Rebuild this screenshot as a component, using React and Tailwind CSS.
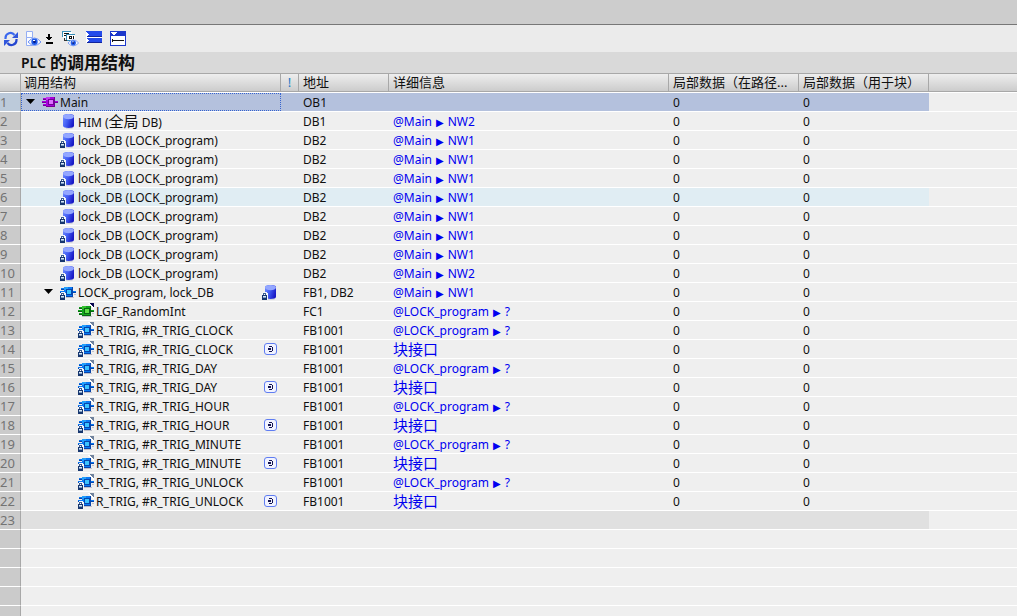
import React from 'react';
import clsx from 'clsx';

const rows = [
  { level: 0, icon: 'ob', open: true, name: 'Main', address: 'OB1', selected: true },
  { level: 1, icon: 'db', name: 'HIM', cjk: '全局', address: 'DB1', link: '@Main', target: 'NW2' },
  { level: 1, icon: 'idb', name: 'lock_DB (LOCK_program)', address: 'DB2', link: '@Main', target: 'NW1' },
  { level: 1, icon: 'idb', name: 'lock_DB (LOCK_program)', address: 'DB2', link: '@Main', target: 'NW1' },
  { level: 1, icon: 'idb', name: 'lock_DB (LOCK_program)', address: 'DB2', link: '@Main', target: 'NW1' },
  { level: 1, icon: 'idb', name: 'lock_DB (LOCK_program)', address: 'DB2', link: '@Main', target: 'NW1', hover: true },
  { level: 1, icon: 'idb', name: 'lock_DB (LOCK_program)', address: 'DB2', link: '@Main', target: 'NW1' },
  { level: 1, icon: 'idb', name: 'lock_DB (LOCK_program)', address: 'DB2', link: '@Main', target: 'NW1' },
  { level: 1, icon: 'idb', name: 'lock_DB (LOCK_program)', address: 'DB2', link: '@Main', target: 'NW1' },
  { level: 1, icon: 'idb', name: 'lock_DB (LOCK_program)', address: 'DB2', link: '@Main', target: 'NW2' },
  { level: 1, icon: 'fb', open: true, name: 'LOCK_program, lock_DB', right: 'idb', address: 'FB1, DB2', link: '@Main', target: 'NW1' },
  { level: 2, icon: 'fc', name: 'LGF_RandomInt', address: 'FC1', link: '@LOCK_program', target: '?' },
  ...['CLOCK', 'DAY', 'HOUR', 'MINUTE', 'UNLOCK'].flatMap((n) => [
    { level: 2, icon: 'fbLib', name: `R_TRIG, #R_TRIG_${n}`, address: 'FB1001', link: '@LOCK_program', target: '?' },
    { level: 2, icon: 'fbLib', name: `R_TRIG, #R_TRIG_${n}`, right: 'iface', address: 'FB1001', link: '块接口' },
  ]),
];

const indent = ['pl-[2px]', 'pl-[20px]', 'pl-[38px]'];

const Lock = () => (
  <g shapeRendering="crispEdges">
    <path d="M0 9h1V8h4v1h1v7H0z" fill="#f4f6fa" />
    <path d="M1 9h3v2H1z" fill="#3a5c92" />
    <path d="M2 10h1v1H2z" fill="#fff" />
    <path d="M0 11h5v5H0z" fill="#17366e" />
    <path d="M1 12h3v1H1z" fill="#d5e6f6" />
    <path d="M1 13h3v1H1z" fill="#7f9fc4" />
  </g>
);

const Cylinder = ({ locked }) => (
  <svg width="16" height="16" viewBox="0 0 16 16" aria-hidden="true">
    <defs>
      <linearGradient id="cyl" x1="0" x2="1" y1="0.1" y2="0.5">
        <stop offset="0" stopColor="#6f8cff" />
        <stop offset="0.5" stopColor="#405af2" />
        <stop offset="1" stopColor="#1a1ac6" />
      </linearGradient>
    </defs>
    <path d="M5 4h9v10l-2 2H6z" fill="#b9bcd0" opacity="0.5" />
    <path d="M3 3c0-2.6 11-2.6 11 0v10c0 2.6-11 2.6-11 0z" fill="url(#cyl)" />
    <ellipse cx="8.5" cy="3.6" rx="5.5" ry="2.6" fill="#94a7ff" />
    {locked && <Lock />}
  </svg>
);

const blockColors = {
  ob: { body: '#a800dc', light: '#dd70ff', pin: '#720096' },
  fb: { body: '#0a7af5', light: '#3cc4ff', pin: '#0645ac' },
  fc: { body: '#12a41e', light: '#5ce044', pin: '#086412' },
};

const Block = ({ kind, locked, corner }) => {
  const c = blockColors[kind];
  return (
    <svg width="16" height="16" viewBox="0 0 16 16" shapeRendering="crispEdges" aria-hidden="true">
      <path d="M4 13h10v1H4zM14 10h2v1h-2z" fill="#c0c0ca" />
      <path d="M1 5h3v1H1zM0 8h4v1H0zM1 11h3v1H1zM13 8h3v1h-3z" fill={c.pin} />
      <path d="M1 4h3v1H1zM0 7h4v1H0zM1 10h3v1H1zM13 7h3v1h-3z" fill={c.body} />
      <path d="M4 3h9v10H4z" fill={c.body} />
      <path d="M4 12h9v1H4zM12 3h1v10h-1z" fill={c.pin} />
      <path d="M4 3h4v3H4z" fill={c.light} opacity="0.5" />
      <path d="M6 5h6v6H6z" fill={c.pin} />
      <path d="M7 6h4v4H7z" fill={c.light} />
      {corner && (
        <>
          <path d="M9 0h7v7z" fill="#fff" />
          <path d="M11 0h5v5z" fill={corner} />
        </>
      )}
      {locked && <Lock />}
    </svg>
  );
};

const Interface = () => (
  <svg width="16" height="16" viewBox="0 0 16 16" aria-hidden="true">
    <rect x="2.5" y="2.5" width="12" height="11" rx="2.5" fill="#f1f3ff" stroke="#5f7df2" />
    <path d="M7 5h3v1h1v4h-1v1H7v-1h3V6H7zM6 7h3v2H6z" fill="#141450" shapeRendering="crispEdges" />
  </svg>
);

const RowIcon = ({ type }) => {
  if (type === 'db') return <Cylinder />;
  if (type === 'idb') return <Cylinder locked />;
  if (type === 'ob') return <Block kind="ob" />;
  if (type === 'fb') return <Block kind="fb" locked />;
  if (type === 'fc') return <Block kind="fc" corner="#080850" />;
  if (type === 'fbLib') return <Block kind="fb" locked corner="#71839d" />;
  return <Interface />;
};

const Eye = () => (
  <>
    <path d="M3 11q6.5-8 13 0q-6.5 7-13 0z" fill="#f6f9ff" stroke="#6f92f4" />
    <circle cx="9.5" cy="10.8" r="3.2" fill="#1f5cec" />
    <circle cx="9.5" cy="10.8" r="1.4" fill="#061a80" />
    <path d="M8 9h2v1H8z" fill="#fff" />
  </>
);

const RefreshIcon = () => (
  <svg width="16" height="16" viewBox="0 0 16 16" aria-hidden="true">
    <path d="M2.5 8V7a5 5 0 0 1 9-3" fill="none" stroke="#3b68ee" strokeWidth="2.2" />
    <path d="M15 1v6H9z" fill="#3157dc" />
    <path d="M13.5 8v1a5 5 0 0 1-9 3" fill="none" stroke="#2547d0" strokeWidth="2.2" />
    <path d="M1 15V9h6z" fill="#3157dc" />
  </svg>
);

const ViewIcon = () => (
  <svg width="17" height="16" viewBox="0 0 17 16" aria-hidden="true">
    <path d="M1.5 0.5h6v6h-6zM1.5 6.5h6v8h-6z" fill="#fafcff" stroke="#94aef4" />
    <Eye />
  </svg>
);

const DownIcon = () => (
  <svg width="8" height="12" viewBox="0 0 8 12" shapeRendering="crispEdges" aria-hidden="true">
    <path d="M3 1h2v3h2v1H6v1H5v1H3V6H2V5H1V4h2zM1 9h7v2H1z" fill="#000" />
  </svg>
);

const CodeEyeIcon = () => (
  <svg width="17" height="16" viewBox="0 0 17 16" aria-hidden="true">
    <g shapeRendering="crispEdges">
      <path d="M0 0h9v6H0z" fill="#3b91b9" />
      <path d="M1 1h9v6H1z" fill="#fff" />
      <path d="M2 2h5v1H2zM2 4h2v1H2z" fill="#111" />
      <path d="M4 3h9v7H4z" fill="#338ab4" />
      <path d="M5 4h8v5H5z" fill="#fff" />
      <path d="M7 5h3v3H7zM11 5h1v3h-1z" fill="#111" />
      <path d="M8 6h1v1H8z" fill="#fff" />
      <path d="M2 7h1v2h2v1H2z" fill="#333" />
    </g>
    <g transform="translate(3.5 3) scale(0.82)">
      <Eye />
    </g>
  </svg>
);

const CollapseIcon = () => (
  <svg width="16" height="16" viewBox="0 0 16 16" shapeRendering="crispEdges" aria-hidden="true">
    <path d="M0 0h16v5H0zM0 7h16v5H0z" fill="#254bea" />
    <path d="M0 5h16v1H0zM0 11h16v1H0z" fill="#11249c" />
    <path d="M0 6h16v1H0z" fill="#fff" />
    <path d="M0 1h1v1h1v1h1v1H2v1H1v1H0zM0 7h1v1h1v1h1v1H2v1H1v1H0z" fill="#fff" />
  </svg>
);

const ExpandIcon = () => (
  <svg width="16" height="16" viewBox="0 0 16 16" shapeRendering="crispEdges" aria-hidden="true">
    <path d="M0 0h16v15H0z" fill="#1d38cb" />
    <path d="M1 5h14v9H1z" fill="#fff" />
    <path d="M1 1h6v1H6v1H5v1H3V3H2V2H1z" fill="#fff" />
    <path d="M2 8h1v3H2zM3 9h11v1H3z" fill="#111" />
  </svg>
);

const ToolButton = ({ label, className, children }) => (
  <button type="button" aria-label={label} title={label} className={clsx('flex items-center justify-center', className)}>
    {children}
  </button>
);

const HeadCell = ({ className, children }) => (
  <th
    scope="col"
    className={clsx(
      'h-[19px] overflow-hidden border-y border-r border-[#a8a8a8] bg-linear-to-b from-[#eeeeee] to-[#cccccc] p-0 text-[13px] leading-[17px] font-normal whitespace-nowrap',
      className
    )}
  >
    {children}
  </th>
);

const NumberCell = ({ selected, children }) => (
  <td
    className={clsx(
      'h-[19px] border-t border-r border-t-white border-r-[#a8a8a8] p-0 text-[13px] text-[#737373]',
      selected ? 'bg-[#bccada]' : 'bg-[#cbcbcb]'
    )}
  >
    {children}
  </td>
);

const TreeRow = ({ row, index }) => {
  const base = clsx(
    'h-[19px] border-t border-white',
    row.selected && 'bg-[#b4c1dd]',
    row.hover && 'bg-[#e0edf3]'
  );
  const textCell = clsx(base, 'p-0 pt-[2px] pl-[4px]');

  return (
    <tr>
      <NumberCell selected={row.selected}>{index + 1}</NumberCell>
      <td className={clsx(base, 'p-0')}>
        <div
          className={clsx(
            'flex h-[18px] items-center border border-dotted whitespace-nowrap',
            indent[row.level],
            row.selected ? 'border-[#3563cf]' : 'border-transparent'
          )}
        >
          <span className="flex w-[18px] shrink-0 items-center pl-[2px]">
            {row.open && (
              <button type="button" aria-label="折叠" className="block">
                <svg width="9" height="7" viewBox="0 0 9 7" aria-hidden="true">
                  <path d="M0 0h9L4.5 5z" fill="#000" />
                </svg>
              </button>
            )}
          </span>
          <span className="w-[18px] shrink-0">
            <RowIcon type={row.icon} />
          </span>
          <span className="pt-[2px]">
            {row.name}
            {row.cjk && (
              <>
                {' ('}
                <span className="text-[15px] leading-none">{row.cjk}</span>
                {' DB)'}
              </>
            )}
          </span>
          {row.right && (
            <span className="mr-[2px] ml-auto w-[16px]">
              <RowIcon type={row.right} />
            </span>
          )}
        </div>
      </td>
      <td className={clsx(base, 'p-0')} />
      <td className={textCell}>{row.address}</td>
      <td className={clsx(base, 'p-0 pl-[4px]')}>
        {row.link && (
          <a href="#" className="flex h-[18px] items-center text-[#0000f0]">
            {row.target ? (
              <span className="pt-[2px]">
                {row.link}
                <span className="px-1 font-['DejaVu_Sans'] text-[10px] leading-none">▶</span>
                {row.target}
              </span>
            ) : (
              <span className="text-[15px] leading-none">{row.link}</span>
            )}
          </a>
        )}
      </td>
      <td className={textCell}>0</td>
      <td className={textCell}>0</td>
      <td className="border-t border-white p-0" />
    </tr>
  );
};

const App = () => {
  return (
    <div className="flex h-screen flex-col overflow-hidden bg-[#efefef] font-['Noto_Sans','Noto_Sans_CJK_SC',sans-serif] text-[12px] leading-[16px] text-[#101010]">
      <div className="h-[25px] shrink-0 border-b border-[#777777] bg-[#cdcdcd]" />

      <div role="toolbar" className="flex h-[27px] shrink-0 items-center bg-[#ebebeb] pl-[3px]">
        <ToolButton label="刷新">
          <RefreshIcon />
        </ToolButton>
        <ToolButton label="视图选项" className="ml-[6px]">
          <ViewIcon />
        </ToolButton>
        <ToolButton label="更多" className="ml-[3px]">
          <DownIcon />
        </ToolButton>
        <ToolButton label="一致性检查" className="ml-[9px]">
          <CodeEyeIcon />
        </ToolButton>
        <ToolButton label="全部折叠" className="ml-[7px]">
          <CollapseIcon />
        </ToolButton>
        <ToolButton label="全部展开" className="ml-[8px]">
          <ExpandIcon />
        </ToolButton>
      </div>

      <h1 className="flex h-[21px] shrink-0 items-center gap-1 bg-[#d9d9d9] pl-[21px] text-[14px] font-semibold">
        <span>PLC</span>
        <span className="text-[17px] font-bold">的调用结构</span>
      </h1>

      <table className="w-full table-fixed border-separate border-spacing-0">
        <colgroup>
          <col className="w-[21px]" />
          <col className="w-[260px]" />
          <col className="w-[18px]" />
          <col className="w-[90px]" />
          <col className="w-[280px]" />
          <col className="w-[130px]" />
          <col className="w-[130px]" />
          <col />
        </colgroup>
        <thead>
          <tr>
            <HeadCell />
            <HeadCell className="pl-[3px] text-left">调用结构</HeadCell>
            <HeadCell className="text-center text-[#1f7ac4]">!</HeadCell>
            <HeadCell className="pl-[4px] text-left">地址</HeadCell>
            <HeadCell className="pl-[4px] text-left">详细信息</HeadCell>
            <HeadCell className="pl-[4px] text-left">局部数据（在路径...</HeadCell>
            <HeadCell className="pl-[4px] text-left">局部数据（用于块）</HeadCell>
            <HeadCell className="border-r-0" />
          </tr>
        </thead>
        <tbody>
          {rows.map((row, i) => (
            <TreeRow key={i} row={row} index={i} />
          ))}
          <tr>
            <NumberCell>{rows.length + 1}</NumberCell>
            <td colSpan={6} className="border-t border-white bg-[#e0e0e0] p-0" />
            <td className="border-t border-white p-0" />
          </tr>
          {[...Array(5)].map((_, i) => (
            <tr key={i}>
              <NumberCell />
              <td colSpan={7} className="border-t border-white p-0" />
            </tr>
          ))}
        </tbody>
      </table>
    </div>
  );
};

export default App;
